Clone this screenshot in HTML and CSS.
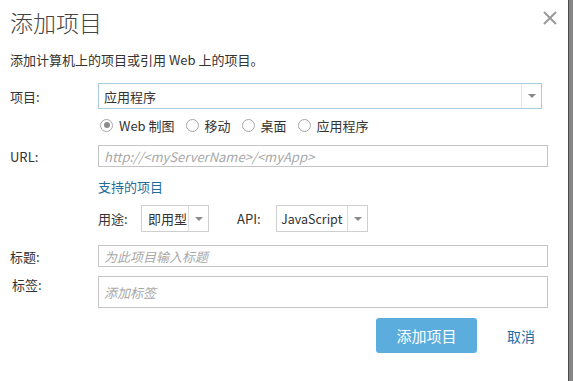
FILE: index.html
```html
<!DOCTYPE html>
<html lang="zh-CN">
<head>
  <meta charset="UTF-8" />
  <title>添加项目</title>
  <link rel="stylesheet" href="styles.css">
</head>
<body>
  <div class="dialog">
    <div class="dialog-head">
      <h1>添加项目</h1>
      <span class="close">
        <svg width="14" height="14" viewBox="0 0 14 14"><path d="M1 1L13 13M13 1L1 13" stroke="#9a9a9a" stroke-width="2" fill="none"/></svg>
      </span>
    </div>
    <p class="intro">添加计算机上的项目或引用 Web 上的项目。</p>

    <div class="row row-item">
      <label class="label">项目:</label>
      <div class="select select-main">
        <span class="select-text">应用程序</span>
        <span class="select-arrow"></span>
      </div>
    </div>

    <div class="radios">
      <span class="radio checked"><i></i>Web 制图</span>
      <span class="radio"><i></i>移动</span>
      <span class="radio"><i></i>桌面</span>
      <span class="radio"><i></i>应用程序</span>
    </div>

    <div class="row row-url">
      <label class="label">URL:</label>
      <div class="input"><span class="placeholder">http://&lt;myServerName&gt;/&lt;myApp&gt;</span></div>
    </div>

    <a class="link">支持的项目</a>

    <div class="usage">
      <span class="use-label">用途:</span>
      <div class="select select-use">
        <span class="select-text">即用型</span>
        <span class="select-arrow"></span>
      </div>
      <span class="api-label">API:</span>
      <div class="select select-api">
        <span class="select-text">JavaScript</span>
        <span class="select-arrow"></span>
      </div>
    </div>

    <div class="row row-title">
      <label class="label">标题:</label>
      <div class="input"><span class="placeholder">为此项目输入标题</span></div>
    </div>

    <div class="row row-tags">
      <label class="label">标签:</label>
      <div class="input input-tags"><span class="placeholder">添加标签</span></div>
    </div>

    <div class="actions">
      <button class="btn-primary">添加项目</button>
      <a class="cancel">取消</a>
    </div>
  </div>
</body>
</html>
```

FILE: styles.css
```css
body {
  margin: 0;
  background: #858585;
  font-family: "Noto Sans CJK SC", "Liberation Sans", sans-serif;
  font-size: 13px;
  color: #333;
}
.dialog {
  box-sizing: border-box;
  width: 569px;
  height: 381px;
  padding: 7px 20px 0 10px;
  background: #fff;
  border-right: 1px solid #4a4a4a;
}
.dialog-head {
  display: flex;
  justify-content: space-between;
  align-items: flex-start;
  margin-right: -10px;
}
.dialog-head h1 {
  margin: 0;
  font-size: 23px;
  font-weight: 300;
  line-height: 30px;
  color: #444;
}
.close {
  margin-top: 3px;
  margin-right: 1px;
  width: 14px;
  height: 14px;
}
.intro {
  margin: 14px 0 0;
  line-height: 18px;
}

/* form rows */
.row {
  display: flex;
  align-items: center;
}
.label {
  width: 88px;
  flex: none;
}
.row-item { margin-top: 14px; }
.select {
  box-sizing: border-box;
  display: flex;
  border: 1px solid #cfcfcf;
  background: #fff;
}
.select-text {
  flex: 1;
  padding-left: 5px;
  display: flex;
  align-items: center;
  white-space: nowrap;
}
.select-arrow {
  width: 19px;
  flex: none;
  border-left: 1px solid #ddd;
  position: relative;
}
.select-arrow::after {
  content: "";
  position: absolute;
  left: 6px;
  top: 50%;
  margin-top: -2px;
  border-left: 4px solid transparent;
  border-right: 4px solid transparent;
  border-top: 4px solid #8a8a8a;
}
.select-main {
  width: 444px;
  height: 26px;
  border-color: #a9cce0;
}
.select-main .select-arrow { border-left-color: #dbe8f0; }

.radios {
  display: flex;
  align-items: center;
  gap: 11px;
  height: 20px;
  margin: 6px 0 0 90px;
}
.radio {
  display: flex;
  align-items: center;
}
.radio i {
  box-sizing: border-box;
  width: 13px;
  height: 13px;
  margin-right: 6px;
  border: 1px solid #a6a6a6;
  border-radius: 50%;
  position: relative;
}
.radio.checked i::after {
  content: "";
  position: absolute;
  left: 2.5px;
  top: 2.5px;
  width: 6px;
  height: 6px;
  border-radius: 50%;
  background: #8c8c8c;
}

.input {
  box-sizing: border-box;
  width: 450px;
  height: 22px;
  border: 1px solid #c4c4c4;
  padding-left: 5px;
  display: flex;
  align-items: center;
}
.placeholder {
  color: #a8a8a8;
  font-style: italic;
}
.row-url { margin-top: 10px; }

.link {
  display: block;
  margin: 11px 0 0 88px;
  line-height: 18px;
  color: #1e6d9c;
}

.usage {
  display: flex;
  align-items: center;
  margin: 9px 0 0 88px;
  height: 27px;
}
.usage .select { height: 27px; }
.use-label { width: 43px; }
.select-use { width: 68px; }
.select-use .select-text { padding-left: 6px; }
.api-label {
  width: 39px;
  margin-left: 28px;
}
.select-api { width: 92px; }
.select-api .select-text {
  padding-left: 4px;
  font-size: 12.5px;
}

.row-title { margin-top: 13px; }
.row-tags {
  margin-top: 9px;
  align-items: flex-start;
}
.row-tags .label {
  padding: 0 0 0 2px;
  width: 86px;
  line-height: 18px;
}
.input-tags { height: 32px; }

.actions {
  display: flex;
  align-items: center;
  justify-content: flex-end;
  margin-top: 10px;
  padding-right: 13px;
}
.btn-primary {
  width: 101px;
  height: 35px;
  border: none;
  border-radius: 3px;
  background: #5badde;
  color: #fff;
  font-family: inherit;
  font-size: 15px;
}
.cancel {
  margin-left: 30px;
  font-size: 14px;
  color: #1f6da5;
}
```
